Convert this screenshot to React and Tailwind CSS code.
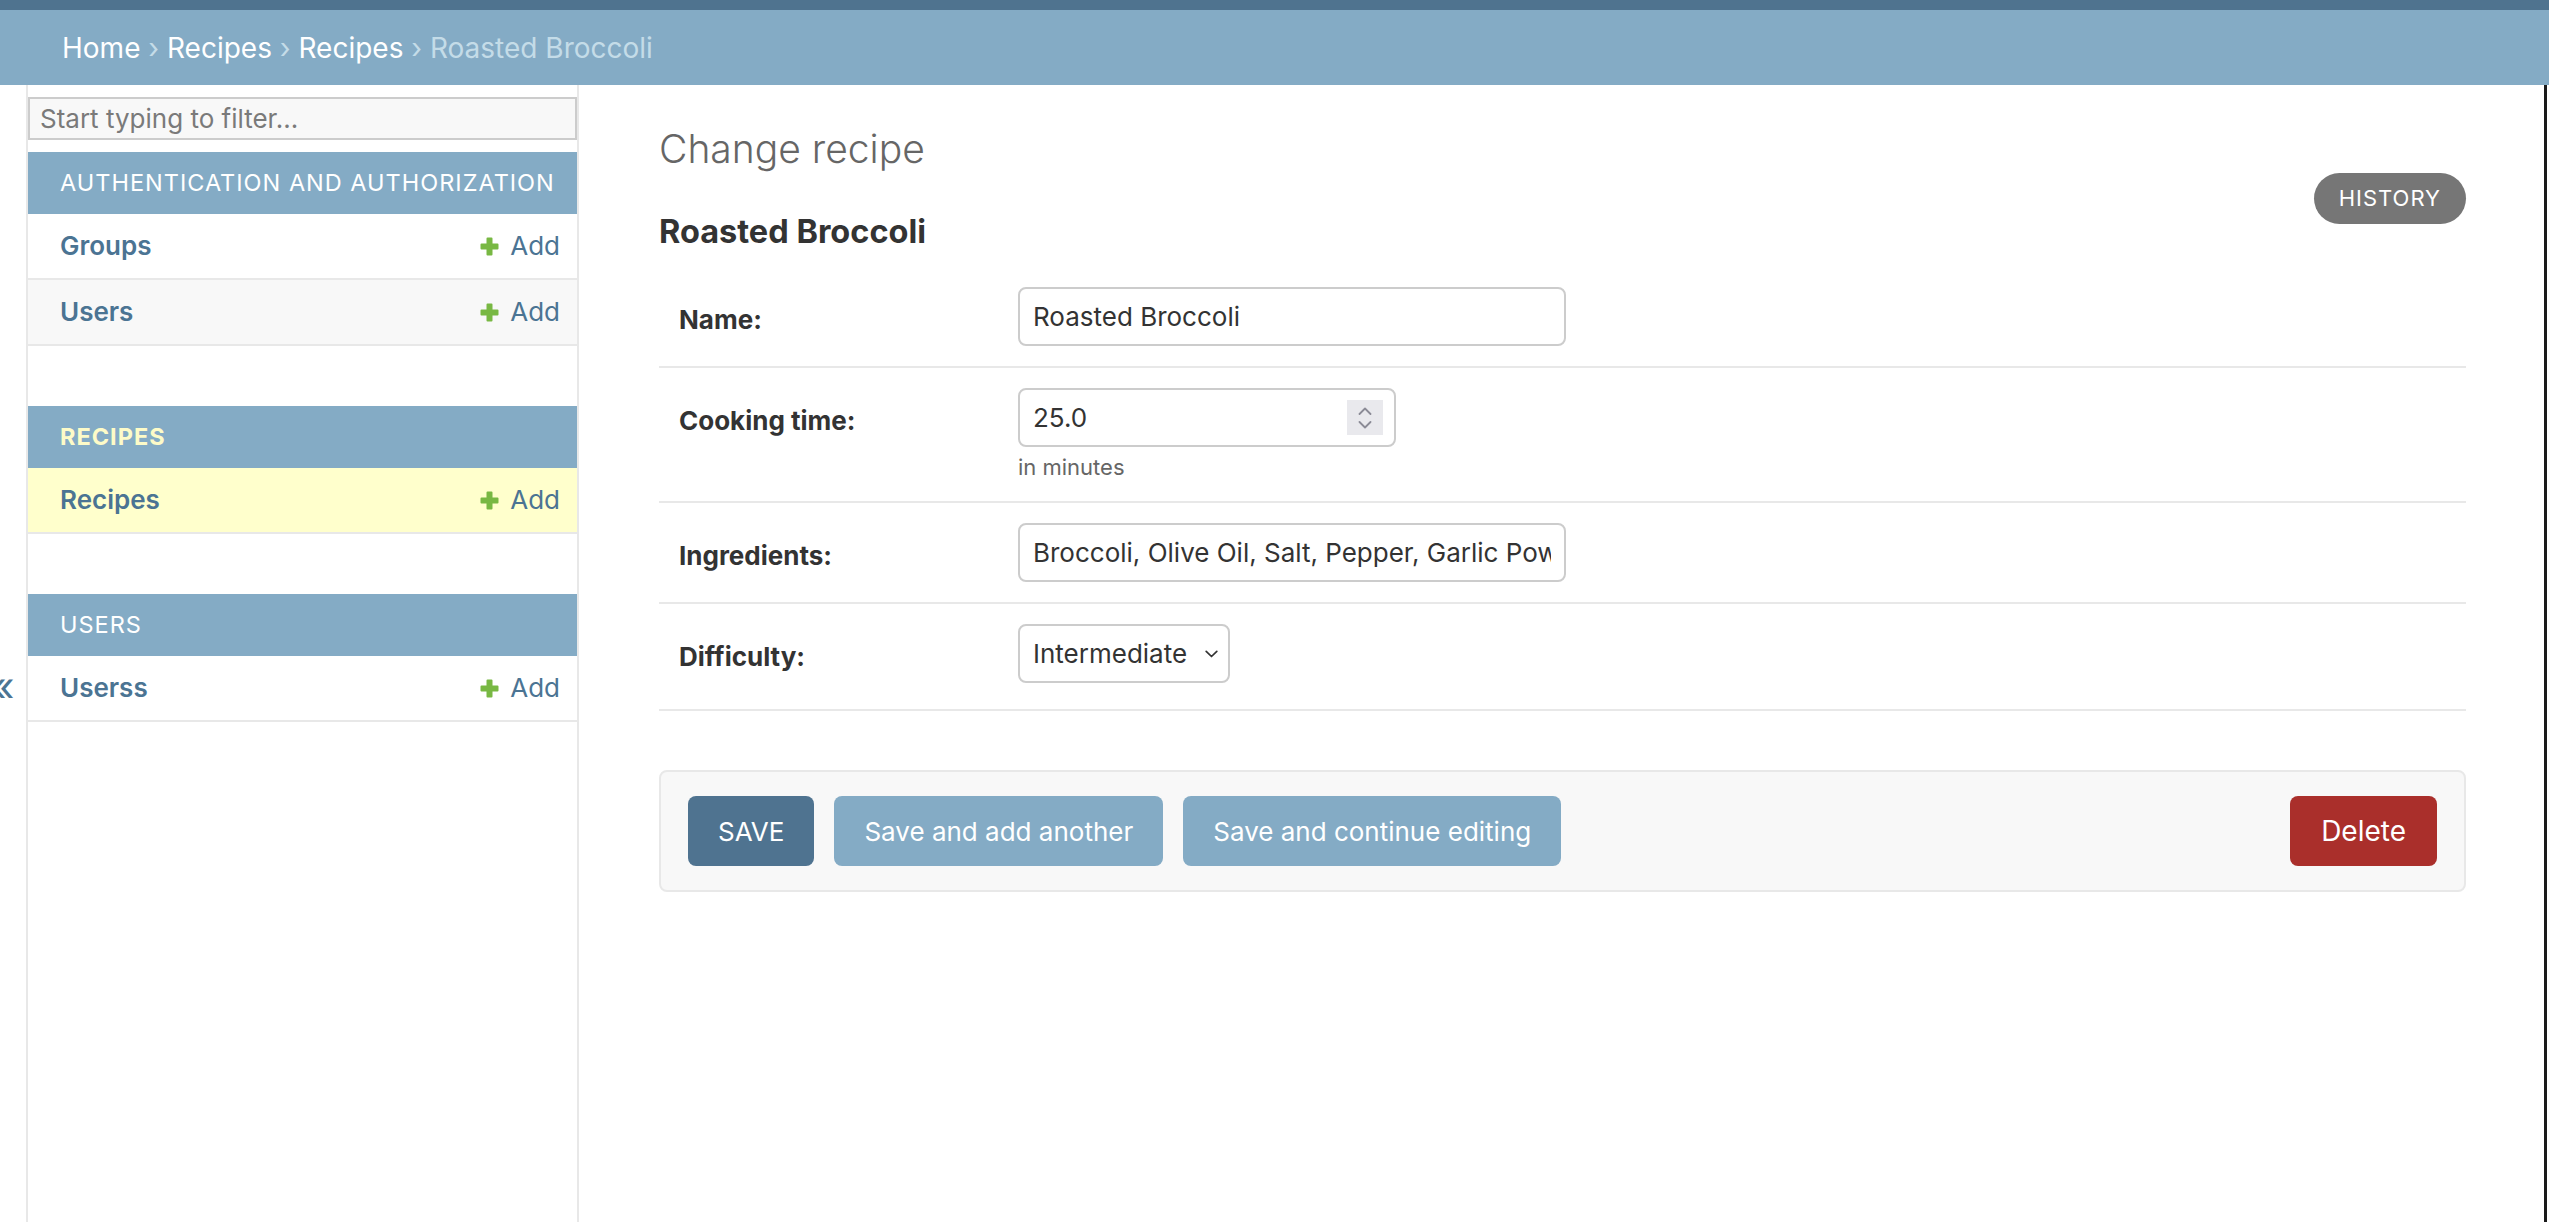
import React from 'react'

const LINK = 'text-[#4b7493]'

function PlusIcon() {
  return (
    <svg width="19" height="19" viewBox="0 0 19 19">
      <path d="M6.5 1.5a1 1 0 0 1 1-1h4a1 1 0 0 1 1 1v5h5a1 1 0 0 1 1 1v4a1 1 0 0 1-1 1h-5v5a1 1 0 0 1-1 1h-4a1 1 0 0 1-1-1v-5h-5a1 1 0 0 1-1-1v-4a1 1 0 0 1 1-1h5z" fill="#78b843" />
    </svg>
  )
}

function Caption({ children, current }) {
  return (
    <div
      className={
        current
          ? 'bg-[#84abc5] py-[16px] pl-[32px] text-[23.5px] leading-[30px] tracking-[1px] uppercase font-bold text-[#fdfbc8]'
          : 'bg-[#84abc5] py-[16px] pl-[32px] text-[23.5px] leading-[30px] tracking-[1px] uppercase text-white'
      }
    >
      {children}
    </div>
  )
}

function ModelRow({ name, shade }) {
  const bg = shade === 'alt' ? 'bg-[#f8f8f8]' : shade === 'current' ? 'bg-[#ffffcc]' : 'bg-white'
  return (
    <div className={`flex items-center justify-between border-b-2 border-[#e8e8e8] py-[17px] pl-[32px] pr-[17px] text-[26px] leading-[30px] ${bg}`}>
      <span className={`font-semibold ${LINK}`}>{name}</span>
      <span className={`flex items-center gap-[11px] ${LINK}`}>
        <PlusIcon />
        Add
      </span>
    </div>
  )
}

function Sidebar() {
  return (
    <div className="w-[551px] shrink-0 border-r-2 border-[#e8e8e8]">
      <div className="mt-[12px] mb-[12px] h-[43px] border-2 border-[#cccccc] bg-[#f8f8f8] flex items-center pl-[10px] text-[26px] text-[#7a7a7a]">
        Start typing to filter...
      </div>
      <div className="mb-[60px]">
        <Caption>Authentication and Authorization</Caption>
        <ModelRow name="Groups" />
        <ModelRow name="Users" shade="alt" />
      </div>
      <div className="mb-[60px]">
        <Caption current>Recipes</Caption>
        <ModelRow name="Recipes" shade="current" />
      </div>
      <div>
        <Caption>Users</Caption>
        <ModelRow name="Userss" />
      </div>
    </div>
  )
}

function Field({ label, children, last }) {
  return (
    <div className={`flex items-start border-b-2 border-[#e8e8e8] px-[20px] pt-[20px] ${last ? 'pb-[26px]' : 'pb-[20px]'}`}>
      <label className="w-[339px] shrink-0 h-[59px] flex items-center pt-[5px] text-[26px] font-bold text-[#333]">
        {label}
      </label>
      <div>{children}</div>
    </div>
  )
}

function TextBox({ value, width }) {
  return (
    <div className={`${width} h-[59px] border-2 border-[#cccccc] rounded-[8px] bg-white px-[13px] flex items-center text-[26px] text-[#333]`}>
      <div className="flex-1 overflow-hidden whitespace-nowrap">{value}</div>
    </div>
  )
}

export default function App() {
  return (
    <div className="min-h-[1222px] flex flex-col bg-white [font-family:Inter,'Noto_Sans',sans-serif] text-[#333]">
      <div className="h-[10px] bg-[#4f738f]" />
      <div className="h-[75px] bg-[#84abc5] flex items-center pl-[62px] text-[28px] text-[#c4dce8] whitespace-pre">
        <span className="text-white">Home</span>
        {' › '}
        <span className="text-white">Recipes</span>
        {' › '}
        <span className="text-white">Recipes</span>
        {' › '}
        <span>Roasted Broccoli</span>
      </div>

      <div className="flex flex-1">
        <div className="w-[28px] shrink-0 border-r-2 border-[#e8e8e8] overflow-hidden">
          <div className="w-[46px] -ml-[20px] pt-[578px] flex justify-center text-[40px] leading-[48px] text-[#4b7493]">
            «
          </div>
        </div>

        <Sidebar />

        <div className="flex-1 pl-[80px] pr-[78px] pt-[40px]">
          <div className="flex items-start justify-between">
            <div>
              <h1 className="text-[39px] leading-[48px] font-light text-[#666]">Change recipe</h1>
              <h2 className="mt-[40px] text-[32.5px] leading-[38px] font-bold text-[#333]">Roasted Broccoli</h2>
            </div>
            <div className="mt-[48px] h-[51px] px-[25px] rounded-full bg-[#767676] flex items-center text-[22px] tracking-[1px] uppercase text-white">
              History
            </div>
          </div>

          <div className="mt-[16px]">
            <Field label="Name:">
              <TextBox value="Roasted Broccoli" width="w-[548px]" />
            </Field>
            <Field label="Cooking time:">
              <div className="w-[378px] h-[59px] border-2 border-[#cccccc] rounded-[8px] bg-white pl-[13px] pr-[11px] flex items-center justify-between text-[26px] text-[#333]">
                <span>25.0</span>
                <span className="w-[36px] h-[35px] bg-[#e9e9ed] flex flex-col items-center justify-center gap-[6px]">
                  <svg width="14" height="8" viewBox="0 0 14 8">
                    <path d="M1.5 7 7 1.5 12.5 7" fill="none" stroke="#8b8b96" strokeWidth="1.8" strokeLinecap="round" strokeLinejoin="round" />
                  </svg>
                  <svg width="14" height="8" viewBox="0 0 14 8">
                    <path d="M1.5 1 7 6.5 12.5 1" fill="none" stroke="#8b8b96" strokeWidth="1.8" strokeLinecap="round" strokeLinejoin="round" />
                  </svg>
                </span>
              </div>
              <div className="mt-[6px] text-[22px] leading-[28px] text-[#666]">in minutes</div>
            </Field>
            <Field label="Ingredients:">
              <TextBox value="Broccoli, Olive Oil, Salt, Pepper, Garlic Powder" width="w-[548px]" />
            </Field>
            <Field label="Difficulty:" last>
              <div className="w-[212px] h-[59px] border-2 border-[#cccccc] rounded-[8px] bg-white pl-[13px] pr-[10px] flex items-center justify-between text-[26px] text-[#333]">
                <span>Intermediate</span>
                <svg width="13" height="8" viewBox="0 0 13 8">
                  <path d="M1.2 1.3 6.5 6.5 11.8 1.3" fill="none" stroke="#333" strokeWidth="1.7" strokeLinecap="round" strokeLinejoin="round" />
                </svg>
              </div>
            </Field>
          </div>

          <div className="mt-[59px] flex gap-[20px] rounded-[8px] border-2 border-[#e8e8e8] bg-[#f8f8f8] px-[27px] py-[24px] text-[26px] text-white">
            <div className="h-[70px] px-[30px] rounded-[8px] bg-[#4f7390] flex items-center">SAVE</div>
            <div className="h-[70px] px-[30px] rounded-[8px] bg-[#84abc5] flex items-center">Save and add another</div>
            <div className="h-[70px] px-[30px] rounded-[8px] bg-[#84abc5] flex items-center">Save and continue editing</div>
            <div className="ml-auto h-[70px] px-[31px] rounded-[8px] bg-[#aa2f2b] flex items-center text-[28px]">Delete</div>
          </div>
        </div>

        <div className="w-[3px] shrink-0 bg-[#1a1a1a]" />
        <div className="w-[2px] shrink-0 bg-white" />
      </div>
    </div>
  )
}
